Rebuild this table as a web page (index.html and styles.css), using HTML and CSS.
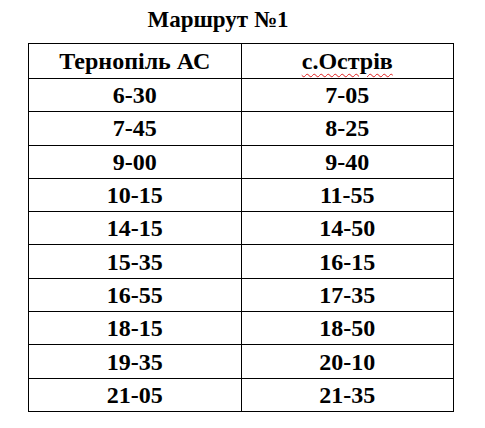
FILE: index.html
```html
<!DOCTYPE html>
<html>
<head>
<meta charset="utf-8">
<link rel="stylesheet" href="styles.css">
</head>
<body>
<div class="page">
  <h1 class="title">Маршрут №1</h1>
  <table class="schedule">
    <tr class="head"><td>Тернопіль АС</td><td><span class="spell">с.Острів</span></td></tr>
    <tr><td>6-30</td><td>7-05</td></tr>
    <tr><td>7-45</td><td>8-25</td></tr>
    <tr><td>9-00</td><td>9-40</td></tr>
    <tr><td>10-15</td><td>11-55</td></tr>
    <tr><td>14-15</td><td>14-50</td></tr>
    <tr><td>15-35</td><td>16-15</td></tr>
    <tr><td>16-55</td><td>17-35</td></tr>
    <tr><td>18-15</td><td>18-50</td></tr>
    <tr><td>19-35</td><td>20-10</td></tr>
    <tr><td>21-05</td><td>21-35</td></tr>
  </table>
</div>
</body>
</html>
```
FILE: styles.css
```css
html, body {
  margin: 0;
  padding: 0;
  background: #fff;
}
body {
  font-family: "Liberation Serif", "Times New Roman", serif;
  color: #000;
}
.page {
  padding: 0 0 0 28px;
}
.title {
  margin: 0;
  padding: 6px 0 0 0;
  height: 43px;
  box-sizing: border-box;
  width: 380px;
  text-align: center;
  font-size: 23px;
  font-weight: bold;
  line-height: 27px;
}
.schedule {
  border-collapse: collapse;
  width: 426px;
  table-layout: fixed;
}
.schedule td {
  border: 1.5px solid #000;
  text-align: center;
  font-size: 24px;
  font-weight: bold;
  height: 32.3px;
  padding: 0;
  vertical-align: middle;
  line-height: 28px;
}
.schedule tr.head td {
  height: 34px;
}
.spell {
  text-decoration: underline wavy #e02020;
  text-decoration-thickness: 1px;
  text-underline-offset: 4px;
}
```
